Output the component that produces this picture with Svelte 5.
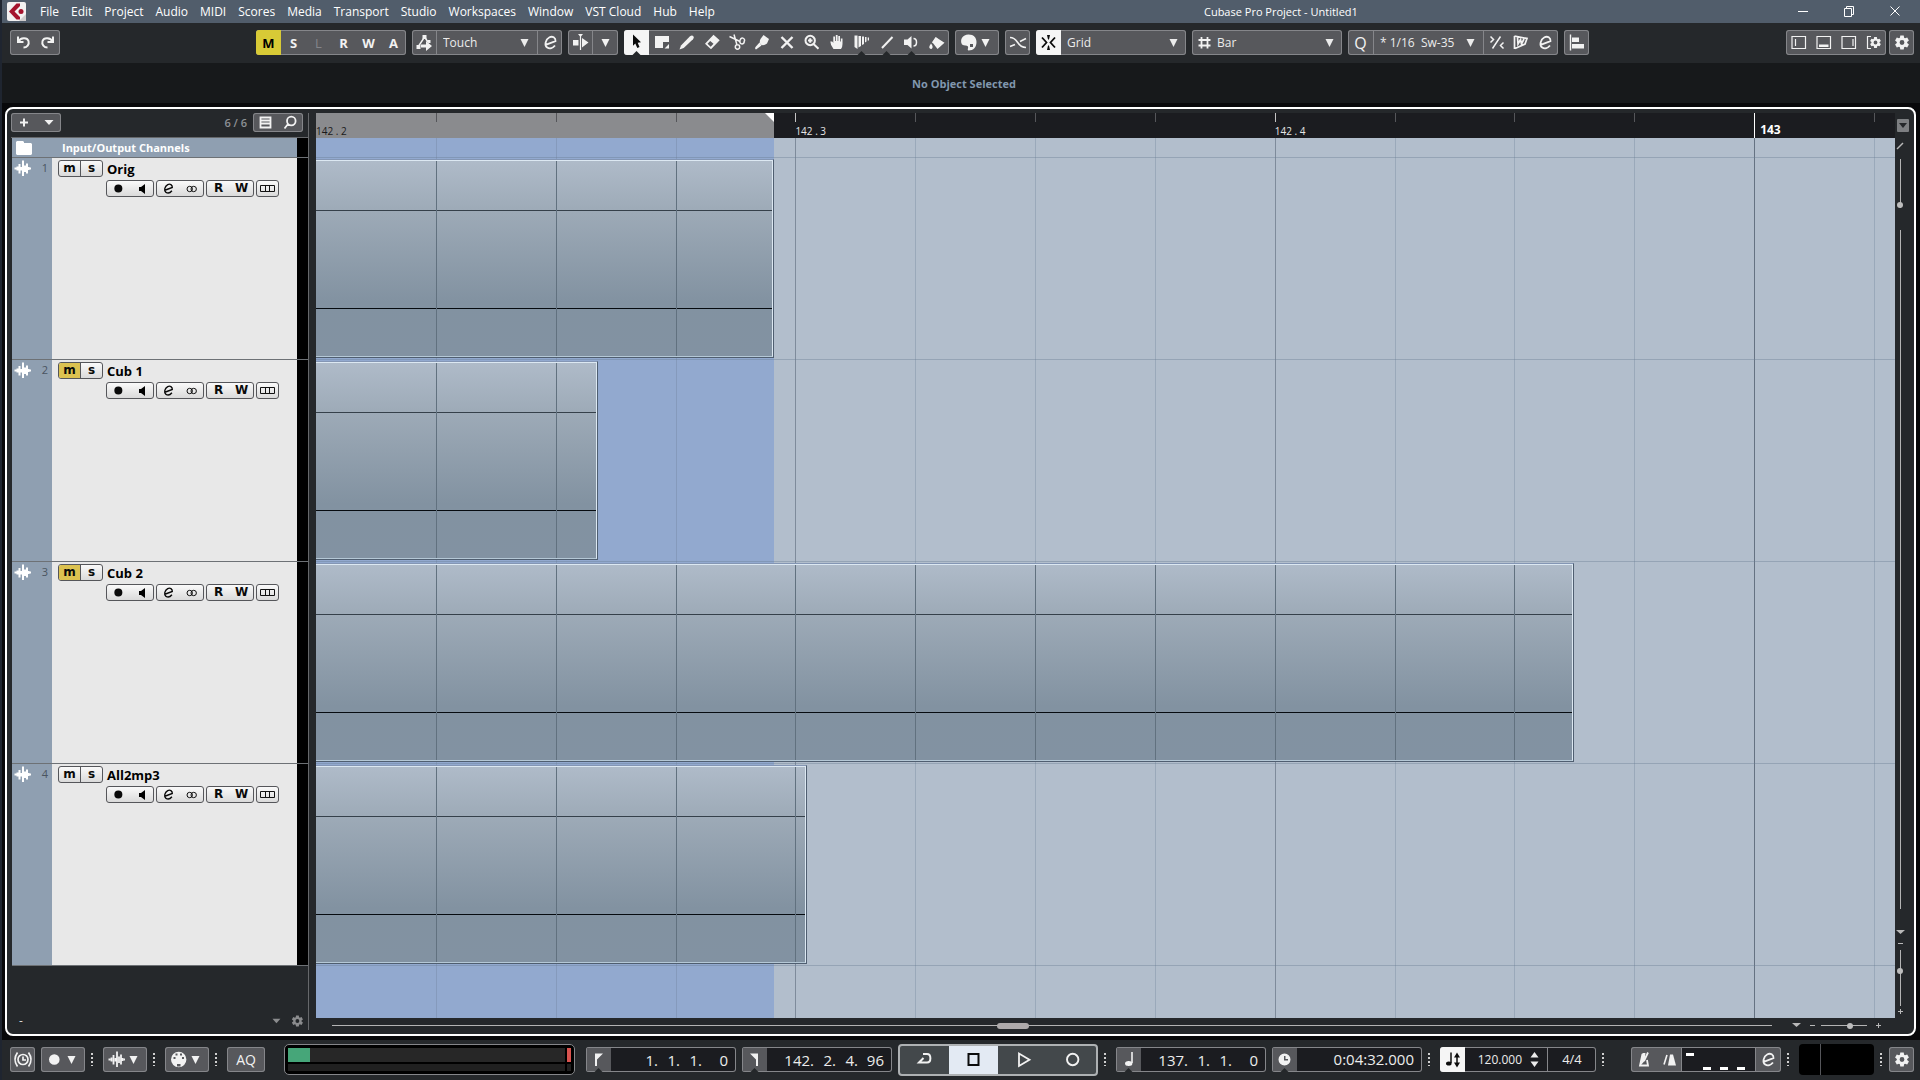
<script>
  // Builds a six-toothed cog outline around a round hole.
  function cog(cx, cy, outer, inner, hole) {
    const points = [];
    for (let i = 0; i < 6; i++) {
      const a = (i * Math.PI) / 3 - Math.PI / 2;
      for (const [offset, r] of [[-0.42, inner], [-0.24, outer], [0.24, outer], [0.42, inner]]) {
        points.push(`${(cx + r * Math.cos(a + offset)).toFixed(2)} ${(cy + r * Math.sin(a + offset)).toFixed(2)}`);
      }
    }
    return `M${points.join('L')}Z M${cx - hole} ${cy}a${hole} ${hole} 0 1 0 ${hole * 2} 0a${hole} ${hole} 0 1 0 ${-hole * 2} 0Z`;
  }

  // Every icon is drawn on a 25 unit square: f = filled, s = stroked, w = stroke width, n = dark notch below.
  const icons = {
    undo: { s: 'M8 6.5V12H13.500 M8.500 11.500C10.500 7.500 17 7 18.500 11C19.500 14.500 17 17.500 13.500 17.500', w: 2 },
    redo: { s: 'M18 6.5V12H12.500 M17.500 11.500C15.500 7.500 9 7 7.500 11C6.500 14.500 9 17.500 12.500 17.500', w: 2 },
    automation: { s: 'M6 17L12.500 7L16 12', w: 1.5, f: 'M4.500 15h4v4h-4zM10.500 5h4v4h-4zM15.500 10h3v3h-3zM9 14.500h5V11l6 5-6 5v-3.500H9z' },
    edit: { s: 'M7.700 14.800L17.500 11.200C17.800 7.600 14.500 5.800 11.500 7.300C7.500 9.500 6 15.300 9.200 17.600C11.800 19.200 15 18 17 15.500', w: 1.8 },
    autoscroll: { s: 'M12.500 4V20', w: 1.2, f: 'M10 4h5l-2.500 3zM5 10h5.500v5.500H5zM14 9.500V8l6.500 4.500L14 17.500V9.500z' },
    down: { f: 'M8.500 9h8l-4 8z' },
    arrow: { f: 'M9 4.500L17 12.300L13.700 12.700L15.500 17L13.300 18L11.300 13.600L9 15.800Z', n: true },
    range: { f: 'M6 6H20V12H14V18H6ZM20 14V18.500H15.500Z' },
    pencil: { f: 'M5.500 19.500L7 15.500L16 6.300Q18 4.800 19.400 6.200Q20.500 7.600 19 9.200L9.700 18Z' },
    eraser: { f: 'M14.500 4.800L20.700 10.300L12 19.300L6 13.800ZM11.200 10.900L8.500 13.700L11.700 16.700L14.500 13.800Z' },
    scissors: { s: 'M5.500 6.500L15.500 11.300M10 4.500L13 15M16.200 10.500a2.200 2.200 0 1 1 4 1a2.200 2.200 0 1 1-4-1M11.300 17a2.200 2.200 0 1 1 4.400 0a2.200 2.200 0 1 1-4.400 0', w: 1.5 },
    glue: { f: 'M14.500 5L20 9L18 13.500Q14.500 16.500 11.500 14.500Q10 12 11.500 9ZM10.500 12.500L12.500 15.500L7 19.500Q5.500 19 6.500 17Z' },
    cross: { s: 'M7.500 7L18.500 18M18.500 7L7.500 18', w: 2.4 },
    zoom: { s: 'M6.500 10.500a4.700 4.700 0 1 1 9.400 0a4.700 4.700 0 1 1-9.400 0M14.500 14L19.500 18.800M9 10.500h4.500M11.200 8.300v4.500', w: 2 },
    hand: { f: 'M9.500 19Q6.500 15.500 6.300 11.500H8.300L9.300 13V6.500H11V11H11.800V5H13.600V11H14.300V6H16V11.500H16.800V8.500H18.500V14Q18.500 17 17 19Z' },
    warp: { f: 'M5.500 5.500H8.500V19L5.500 17zM9.500 6h2.500v10l-2.500 1.500zM13 6.500h2v7.500l-2 1zM16 7h1.500v4.500l-1.500 1zM18.700 7.500h1.300v3h-1.300z', n: true },
    line: { s: 'M8 18L18.500 7', w: 2, n: true },
    speaker: { f: 'M5 9.500H8.500L12.500 6V18.500L8.500 15H5z', s: 'M14.500 8.500C18.500 8.500 18.500 16 14.500 16', w: 1.5, n: true },
    paint: { f: 'M11.500 7L20.500 12.800L13.500 19L9.300 13.500L8 12.500ZM7 13.500Q10 17 7.500 19Q4.500 18.500 5.500 16z', s: 'M9 12.500L13 8', w: 1.5 },
    palette: { f: 'M12.500 4.500C18 4.500 20.500 8 20.500 12C20.500 17 17.500 20.500 12.500 20.500C11 20 12.500 18 12 16.500C11 15 8 16 6 14.500C3.500 10 6.500 4.500 12.500 4.500ZM14 14v3h3v-3z' },
    crossfade: { s: 'M5 7.500C14 7.500 11 17.500 21 17.500M5 16.500L10 14.500M15 11.500L21 8.500', w: 1.6 },
    snap: { s: 'M6 7.500L10.500 12.500L6 17.500M19 7.500L14.500 12.500L19 17.500', w: 1.8, f: 'M11 5h3l-1 4.500h-1zM11 20h3l-1-4.500h-1z' },
    hash: { s: 'M9.500 7V18.500M15.500 7V18.500M6.500 10H18.500M6.500 15.500H18.500', w: 1.8 },
    iterative: { s: 'M16.500 6.500L8.500 18.500M6.500 6.500L9.500 9.500L6.500 12.500M19.500 12.500L16.500 15.500L19.500 18.500', w: 1.5 },
    quantize: { s: 'M6.500 6V19M6.500 6L19 8.500L17 14L7 18.500M9.500 7L10 14L12.500 9.500L13.500 14L16 9', w: 1.7 },
    align: { s: 'M6.500 4.500V20.500', w: 1.4, f: 'M8 7.500h7v4.500H8zM8 14h12v4.500H8z' },
    zoneLeft: { s: 'M6 6.500h13.500v12H6zM9.500 9v7', w: 1.2 },
    zoneDown: { s: 'M6 6.500h13.500v12H6z', f: 'M8 14.500h9.500v2.500H8z', w: 1.2 },
    zoneRight: { s: 'M6 6.500h13.500v12H6zM17 9v7', w: 1.2 },
    zoneSetup: { s: 'M10 6.500H6.500V18.500H10', f: cog(14.5, 12.5, 5.6, 4.1, 1.9), w: 1.2 },
    gear: { f: cog(13, 12.5, 7.2, 5.2, 2.4) },
    plus: { s: 'M13 8.500V16.500M9 12.500H17', w: 2 },
    drop: { f: 'M8.500 10h9l-4.500 5z' },
    list: { s: 'M7.500 7.500h10v10h-10zM8 10.500h9M8 13.500h9', w: 1.8 },
    search: { s: 'M9 11a4.300 4.300 0 1 1 8.600 0a4.300 4.300 0 1 1-8.600 0M10 14L6.500 18.500', w: 1.8 },
    wave: { s: 'M4.500 12.500H6.500M7.500 10.500V14.500M9.500 8V17.500M11.500 11V14.500M13 4.500V20M15 9.500V16M17 7.500V17.500M18.500 11V14M19.500 12.500H21', w: 1.8 },
    dot: { f: 'M7 12.500a5.300 5.300 0 1 1 10.600 0a5.300 5.300 0 1 1-10.600 0' },
    engine: { s: 'M8 12.500a5 5 0 1 1 10 0a5 5 0 1 1-10 0M13 9.500V13H16M7.500 5.500Q2.500 12.500 7.500 19.500M18.500 5.500Q23.500 12.500 18.500 19.500', w: 1.7 },
    midi: { f: 'M5 12.500a7.700 7.700 0 1 1 15.400 0a7.700 7.700 0 1 1-15.400 0M7.500 12h2v-2h-2zM9.500 8.500h2v-2h-2zM14 8.500h2v-2h-2zM16 12h2v-2h-2zM11 19.500h3.500v-2.500H11z' },
    left: { f: 'M9 6.500H17L11 12.500V19H9z', n: true },
    right: { f: 'M8 6.500H16V19H14V12.500z', n: true },
    cycle: { s: 'M11 7H15C19.500 7 19.500 15.500 15 15.500H8M11.500 11L7 15.500H15', w: 2 },
    stop: { s: 'M7.500 7h10v11h-10z', w: 2 },
    play: { s: 'M9 6.500V19L19.500 12.700Z', w: 1.8 },
    record: { s: 'M8 12.500a5.700 5.700 0 1 1 11.400 0a5.700 5.700 0 1 1-11.400 0', w: 1.9 },
    note: { s: 'M16 5V16', w: 1.6, f: 'M9 16.500a3.700 2.500 0 1 1 7.400 0a3.700 2.500 0 1 1-7.400 0', n: true },
    clock: { f: 'M6.500 12.500a6 6 0 1 1 12 0a6 6 0 1 1-12 0M12 9v4.500h4V12H13.500V9z', n: true },
    tempo: { s: 'M11 5.500V16M17 8V18', w: 1.5, f: 'M6 16.500a2.800 2 0 1 1 5.600 0a2.800 2 0 1 1-5.600 0M14 10.500L17 5.500L20 10.500zM14 15.500L17 20.500L20 15.500z' },
    metronome: { s: 'M11.500 7L9 18.500H17L16 13M13 14L17 5.500', w: 1.8, f: 'M11.500 6h3l-1 8-4 4.500z' },
    precount: { s: 'M8 17.500L11 8', w: 1.6, f: 'M14 7.500h3L20 18.500H12z' },
    updown: { f: 'M8.500 10.500L12.500 5L16.500 10.500zM8.500 14.500L12.500 20L16.500 14.500z' }
  };

  const menus = ['File', 'Edit', 'Project', 'Audio', 'MIDI', 'Scores', 'Media', 'Transport', 'Studio', 'Workspaces', 'Window', 'VST Cloud', 'Hub', 'Help'];
  const states = ['M', 'S', 'L', 'R', 'W', 'A'];
  const tools = ['arrow', 'range', 'pencil', 'eraser', 'scissors', 'glue', 'cross', 'zoom', 'hand', 'warp', 'line', 'speaker', 'paint'];

  // Clip and selection lengths are counted in sixteenth notes from the left edge of the view.
  const step = 7.59;
  const locatorEnd = 3.821;
  const tracks = [
    { name: 'Orig', muted: false, length: 3.821 },
    { name: 'Cub 1', muted: true, length: 2.353 },
    { name: 'Cub 2', muted: true, length: 10.497 },
    { name: 'All2mp3', muted: false, length: 4.097 }
  ];
  const cells = Array.from({ length: 14 }, (_, i) => i);
  const labels = { 0: '142 . 2', 4: '142 . 3', 8: '142 . 4', 12: '143' };
</script>

{#snippet icon(name, size = 25)}
  <svg class="icon" width={size} height={size} viewBox="0 0 25 25" aria-hidden="true">
    {#if icons[name].f}<path d={icons[name].f} fill="currentColor" fill-rule="evenodd" />{/if}
    {#if icons[name].s}<path d={icons[name].s} fill="none" stroke="currentColor" stroke-width={icons[name].w} />{/if}
    {#if icons[name].n}<path d="M8.500 25l4-4 4 4z" fill="#24272a" />{/if}
  </svg>
{/snippet}

{#snippet tool(name, label, extra = '')}
  <button class="cell {extra}" aria-label={label}>{@render icon(name)}</button>
{/snippet}

{#snippet position(parts)}
  <span class="position">{#each parts as part}<span>{part}</span>{/each}</span>
{/snippet}

<div class="app">
  <header class="menubar">
    <svg class="logo" width="19" height="19" viewBox="0 0 19 19" aria-hidden="true">
      <rect width="19" height="19" rx="2" fill="#f3f1f1" />
      <path d="M12 19L19 12V19z" fill="#cfcccc" />
      <path d="M2 9.500L9.500 1.500H13V4L7.500 9.500L13 15V17.500H9.500Z" fill="#a5132d" />
      <circle cx="14" cy="9.500" r="2.500" fill="#a5132d" />
    </svg>
    <nav class="menus">
      {#each menus as menu}<button class="menu">{menu}</button>{/each}
    </nav>
    <h1>Cubase Pro Project - Untitled1</h1>
    <div class="window-buttons">
      <button aria-label="Minimize"><svg width="12" height="12" viewBox="0 0 12 12"><path d="M1 5.500H11" /></svg></button>
      <button aria-label="Restore"><svg width="12" height="12" viewBox="0 0 12 12"><path d="M1.500 2.500h7v8h-7zM3.500 2.500v-2h7v8h-2" /></svg></button>
      <button aria-label="Close"><svg width="12" height="12" viewBox="0 0 12 12"><path d="M1.500 .5l9 9M10.500 .5l-9 9" /></svg></button>
    </div>
  </header>

  <div class="toolbar">
    <div class="history">
      <div class="group">{@render tool('undo', 'Undo')}{@render tool('redo', 'Redo')}</div>
    </div>
    <div class="group states">
      {#each states as s}<button class="cell state" class:on={s === 'M'} class:off={s === 'L'}>{s}</button>{/each}
    </div>
    <div class="group">
      {@render tool('automation', 'Automation panel', 'split')}
      <label class="drop mode"><select aria-label="Automation mode"><option>Touch</option></select>{@render icon('down')}</label>
      {@render tool('edit', 'Automation settings', 'split-left')}
    </div>
    <div class="group">{@render tool('autoscroll', 'Auto-scroll', 'split')}{@render tool('down', 'Auto-scroll settings')}</div>
    <div class="group">
      {#each tools as t, i}{@render tool(t, t, i === 0 ? 'active' : '')}{/each}
    </div>
    <div class="group"><button class="cell pair" aria-label="Colors">{@render icon('palette')}{@render icon('down')}</button></div>
    <div class="group">{@render tool('crossfade', 'Snap to zero crossing')}</div>
    <div class="group">
      {@render tool('snap', 'Snap', 'active')}
      <label class="drop fill"><select aria-label="Snap type"><option>Grid</option></select>{@render icon('down')}</label>
    </div>
    <div class="group">
      <span class="cell">{@render icon('hash')}</span>
      <label class="drop fill grid-type"><select aria-label="Grid type"><option>Bar</option></select>{@render icon('down')}</label>
    </div>
    <div class="group">
      <button class="cell split q" aria-label="Apply quantize">Q</button>
      <label class="drop preset"><select aria-label="Quantize preset"><option>* 1/16{'\u00a0\u00a0'}Sw-35</option></select>{@render icon('down')}</label>
      {@render tool('iterative', 'Iterative quantize', 'split-left')}{@render tool('quantize', 'Audio warp quantize')}{@render tool('edit', 'Quantize panel')}
    </div>
    <div class="group">{@render tool('align', 'Align')}</div>
    <div class="group last">
      {@render tool('zoneLeft', 'Left zone')}{@render tool('zoneDown', 'Lower zone')}{@render tool('zoneRight', 'Right zone')}{@render tool('zoneSetup', 'Window layout')}
    </div>
    <div class="group tight">{@render tool('gear', 'Toolbar setup')}</div>
  </div>

  <div class="info">No Object Selected</div>

  <main class="desk">
    <div class="frame">
      <section class="tracklist">
        <div class="list-head">
          <div class="group small">{@render tool('plus', 'Add track')}{@render tool('drop', 'Track presets')}</div>
          <span class="count">6 / 6</span>
          <div class="group small">{@render tool('list', 'Track visibility')}{@render tool('search', 'Find tracks')}</div>
        </div>
        <div class="folder">
          <svg width="16" height="14" viewBox="0 0 16 14" aria-hidden="true"><path d="M0 2V1L1 0H7L8 1V2H15L16 3V13L15 14H1L0 13Z" fill="#fff" /></svg>
          <span>Input/Output Channels</span>
        </div>
        {#each tracks as track, i}
          <article class="track">
            <div class="strip">
              <svg width="20" height="20" viewBox="2 2 20 20" aria-hidden="true"><path d={icons.wave.s} stroke="#fff" stroke-width="2" /></svg>
              <span>{i + 1}</span>
            </div>
            <div class="panel">
              <div class="title">
                <div class="pads"><button class:muted={track.muted}>m</button><button>s</button></div>
                <h2>{track.name}</h2>
              </div>
              <div class="controls">
                <div class="pads wide"><button aria-label="Record enable">{@render icon('dot', 19)}</button><button aria-label="Monitor"><svg width="6" height="10" viewBox="0 0 6 10"><path d="M0 3h2l4-3v10L2 7H0z" /></svg></button></div>
                <div class="pads wide"><button aria-label="Edit channel">{@render icon('edit', 19)}</button><button aria-label="Stereo"><svg width="12" height="8" viewBox="0 0 12 8"><path d="M1 4a2.700 2.700 0 1 1 5.400 0a2.700 2.700 0 1 1-5.400 0M5 4a2.700 2.700 0 1 1 5.400 0a2.700 2.700 0 1 1-5.400 0" fill="none" stroke="#111" /></svg></button></div>
                <div class="pads wide"><button>R</button><button>W</button></div>
                <div class="pads"><button aria-label="Lanes"><svg width="15" height="7" viewBox="0 0 15 7"><path d="M.5 .5h14v6H.5zM5.500 0v7M9.500 0v7" fill="none" stroke="#111" /></svg></button></div>
              </div>
            </div>
          </article>
        {/each}
        <div class="list-foot">
          <span>-</span>
          <button aria-label="Zoom presets">{@render icon('drop', 22)}</button>
          <button aria-label="Track list setup">{@render icon('gear', 20)}</button>
        </div>
      </section>

      <section class="arrange">
        <div class="timeline" style="--step: {step}">
          <div class="ruler">
            <div class="range" style="width: {locatorEnd * step}%"><svg width="9" height="9" viewBox="0 0 9 9" aria-hidden="true"><path d="M0 0H9V9z" fill="#fff" /></svg></div>
            <div class="ticks">
              {#each cells as c}
                <div class="tick" class:beat={c % 4 === 0} class:bar={c === 12} class:first={c === 0}><span>{labels[c] ?? ''}</span></div>
              {/each}
            </div>
          </div>
          <div class="canvas">
            <div class="range" style="width: {locatorEnd * step}%"></div>
            <div class="lines">
              {#each cells as c}<i class:first={c === 0} class:beat={c % 4 === 0} class:bar={c === 12}></i>{/each}
            </div>
            <div class="lanes">
              <div class="lane io"></div>
              {#each tracks as track}
                <div class="lane">
                  <div class="clip" style="width: {track.length * step}%">
                    <div class="wave"><b></b><b></b><b></b></div>
                    <div class="lines">
                      {#each cells as c}<i class:first={c === 0}></i>{/each}
                    </div>
                  </div>
                </div>
              {/each}
            </div>
          </div>
        </div>
        <div class="hscroll">
          <input class="scroll" type="range" min="0" max="1000" value="472" aria-label="Horizontal scroll" />
          <button aria-label="Zoom presets"><svg width="9" height="5" viewBox="0 0 9 5"><path d="M0 0h9L4.500 4z" /></svg></button>
          <button aria-label="Zoom out"><svg width="5" height="5" viewBox="0 0 5 5"><path d="M0 2h5v1H0z" /></svg></button>
          <input class="zoom" type="range" min="0" max="100" value="65" aria-label="Horizontal zoom" />
          <button aria-label="Zoom in"><svg width="5" height="5" viewBox="0 0 5 5"><path d="M0 2h5v1H0zM2 0h1v5H2z" /></svg></button>
        </div>
      </section>

      <aside class="rail">
        <button class="divide" aria-label="Divide track list"><svg width="8" height="5" viewBox="0 0 8 5"><path d="M0 0h8L4 5z" fill="#24272a" /></svg></button>
        <svg class="slash" width="8" height="8" viewBox="0 0 8 8" aria-hidden="true"><path d="M1 7L7 1" stroke="#b9b9b9" stroke-width="1.500" /></svg>
        <input class="vertical wave-zoom" type="range" min="0" max="100" value="100" aria-label="Waveform zoom" />
        <div class="vtrack"></div>
        <button aria-label="Track height presets"><svg width="9" height="5" viewBox="0 0 9 5"><path d="M0 0h9L4.500 4z" /></svg></button>
        <button aria-label="Smaller tracks"><svg width="5" height="5" viewBox="0 0 5 5"><path d="M0 2h5v1H0z" /></svg></button>
        <input class="vertical height-zoom" type="range" min="0" max="100" value="36" aria-label="Track height" />
        <button aria-label="Larger tracks"><svg width="5" height="5" viewBox="0 0 5 5"><path d="M0 2h5v1H0zM2 0h1v5H2z" /></svg></button>
      </aside>
    </div>
  </main>

  <footer class="transport">
    <div class="group">{@render tool('engine', 'Constrain delay compensation')}</div>
    <div class="group"><button class="cell pair" aria-label="Record modes">{@render icon('dot')}{@render icon('down')}</button></div>
    <i class="grip"></i>
    <div class="group"><button class="cell pair" aria-label="Audio record mode">{@render icon('wave')}{@render icon('down')}</button></div>
    <i class="grip"></i>
    <div class="group"><button class="cell pair" aria-label="MIDI record mode">{@render icon('midi')}{@render icon('down')}</button></div>
    <i class="grip"></i>
    <div class="group"><button class="cell aq">AQ</button></div>
    <div class="meter"><span class="level"></span><span class="clipping"></span><span class="under"></span><span class="under"></span></div>
    <div class="group readout">{@render tool('left', 'Left locator', 'tag')}{@render position(['1.', '1.', '1.', '0'])}</div>
    <div class="group readout">{@render tool('right', 'Right locator', 'tag')}{@render position(['142.', '2.', '4.', '96'])}</div>
    <div class="play">
      <button aria-label="Cycle">{@render icon('cycle')}</button>
      <button class="active" aria-label="Stop">{@render icon('stop')}</button>
      <button aria-label="Play">{@render icon('play')}</button>
      <button aria-label="Record">{@render icon('record')}</button>
    </div>
    <i class="grip"></i>
    <div class="group readout">{@render tool('note', 'Time format', 'tag')}{@render position(['137.', '1.', '1.', '0'])}</div>
    <div class="group readout">{@render tool('clock', 'Secondary time format', 'tag')}<span class="time">0:04:32.000</span></div>
    <i class="grip"></i>
    <div class="group readout">
      {@render tool('tempo', 'Tempo track', 'active')}
      <span class="tempo">120.000{@render icon('updown')}</span>
      <span class="signature">4/4</span>
    </div>
    <i class="grip"></i>
    <div class="group click">
      {@render tool('metronome', 'Metronome')}{@render tool('precount', 'Precount')}
      <span class="pattern"><svg width="62" height="19" viewBox="0 0 62 19" aria-hidden="true"><path d="M0 0h8v3H0zM17 14h8v3h-8zM34 14h8v3h-8zM51 14h8v3h-8z" fill="#fff" /></svg></span>
      {@render tool('edit', 'Click pattern')}
    </div>
    <i class="grip"></i>
    <div class="activity"></div>
    <i class="grip"></i>
    <div class="group tight">{@render tool('gear', 'Transport setup')}</div>
  </footer>
</div>

<style>
  :global(body) { margin: 0; background: #1f2530; }
  * { box-sizing: border-box; }
  .app {
    display: flex; flex-direction: column; min-height: 100vh; padding-left: 2px; background: #1f2530;
    font: 12px/16px "Open Sans", "Noto Sans", sans-serif; color: #ececec;
  }
  button, select, input { font: inherit; color: inherit; margin: 0; padding: 0; border: 0; background: none; }
  button { display: flex; align-items: center; justify-content: center; }
  svg { display: block; flex: none; }
  h1, h2 { margin: 0; font-size: inherit; }

  .menubar { display: flex; align-items: center; height: 23px; padding-left: 5px; background: #515d6b; color: #fff; }
  .menus { display: flex; gap: 12px; margin-left: 14px; }
  h1 { flex: 1; font-size: 11px; font-weight: 400; text-align: center; padding-left: 50px; }
  .window-buttons { display: flex; gap: 34px; padding-right: 19px; }
  .window-buttons path { fill: none; stroke: #fff; }

  .toolbar { display: flex; gap: 6px; height: 40px; padding: 7px 6px 0 8px; background: #25282b; }
  .history { width: 240px; display: flex; }
  .group {
    display: flex; flex: none; height: 25px; overflow: hidden; align-items: stretch;
    background: #57585c; border: 0 solid #85868a; box-shadow: inset 0 0 0 1px #85868a; border-radius: 3px;
  }
  .cell { display: flex; align-items: center; justify-content: center; width: 25px; color: #f2f2f2; }
  .split { border-right: 1px solid #85868a; }
  .split-left { border-left: 1px solid #85868a; }
  .active { background: #f5f5f5; color: #0c0c0c; }
  .state { font-weight: 700; font-size: 13px; }
  .state.on { background: #d8ca36; color: #000; }
  .state.off { color: #84858a; font-weight: 400; }
  .pair { width: 44px; }
  .pair > :global(svg) { margin: 0 -4px; }
  .q { width: 26px; font-size: 16px; }
  .last { margin-left: auto; }
  .tight { margin-left: -3px; }
  .drop { display: grid; align-items: center; }
  .drop > :global(*) { grid-area: 1 / 1; }
  .drop > :global(svg) { justify-self: end; pointer-events: none; }
  .drop select { appearance: none; width: 100%; height: 25px; padding-left: 6px; }
  .drop option { color: #111; }
  .mode { width: 100px; }
  .fill { width: 125px; }
  .grid-type select { padding-left: 0; }
  .preset { width: 109px; }

  .info { height: 40px; padding-left: 6px; background: #17191b; color: #8197ae; font-size: 11px; font-weight: 700; line-height: 42px; text-align: center; }

  .desk { display: flex; flex: 1; padding: 4px 4px 4px 3px; background: #08080a; }
  .frame {
    flex: 1; display: grid; grid-template-columns: 298px minmax(0, 1fr) 19px; padding: 4px 0 0 4px;
    border: 2px solid #fff; border-radius: 8px; background: #25282b;
  }
  .tracklist { display: flex; flex-direction: column; margin-bottom: 4px; border-right: 1px solid #66686b; }
  .list-head { display: flex; align-items: flex-start; height: 25px; padding-right: 5px; border-bottom: 1px solid #66686b; }
  .small { height: 19px; align-items: center; }
  .count { margin-left: auto; padding-right: 6px; font-size: 11px; font-weight: 600; line-height: 20px; color: #8d9196; }
  .folder, .track { margin-left: 1px; border-bottom: 1px solid #6d7175; }
  .folder {
    display: flex; align-items: center; gap: 30px; height: 20px; padding-left: 4px; color: #fff; font-size: 11px; font-weight: 700;
    background: linear-gradient(90deg, #8f9fb1 calc(100% - 11px), #000 0);
  }
  .track { display: grid; grid-template-columns: 40px 1fr; height: 202px; }
  .strip { display: flex; justify-content: space-between; align-items: flex-start; padding-right: 4px; background: #8f9fb1; }
  .strip span { font-size: 11px; line-height: 20px; color: #4a5460; }
  .panel { padding: 2px 0 0 6px; background: #e8e8e8; border-right: 11px solid #000; color: #000; }
  .title { display: flex; gap: 4px; }
  h2 { font-size: 13px; font-weight: 700; line-height: 18px; }
  .controls { display: flex; gap: 2px; padding: 2px 0 0 48px; }
  .pads {
    display: flex; height: 17px; overflow: hidden; border: 1px solid #55565a; border-radius: 3px;
    background: linear-gradient(#fafafa, #dadada); font: 700 12px/15px "DejaVu Sans", sans-serif;
  }
  .pads button { width: 21px; color: #0a0a0a; }
  .pads button.muted { background: #dcc250; }
  .title .pads button + button { width: 22px; border-left: 1px solid #55565a; }
  .wide button { width: 23px; }
  .list-foot { display: flex; align-items: center; margin-top: auto; padding: 0 1px 0 8px; height: 18px; color: #8b8c8e; }
  .list-foot span { color: #d8d8d8; margin-right: auto; }

  .arrange { display: flex; flex-direction: column; margin-left: 7px; min-width: 0; }
  .timeline { flex: 1; display: flex; flex-direction: column; container-type: inline-size; }
  .ruler { display: grid; height: 25px; overflow: hidden; background: #1b1c20; }
  .ruler > *, .canvas > *, .clip > * { grid-area: 1 / 1; min-width: 0; }
  .ruler .range { display: flex; justify-content: flex-end; background: #8a8b8e; }
  .ticks, .lines { display: flex; overflow: hidden; }
  .tick, .lines i { flex: none; width: calc(var(--step) * 1cqw); }
  .tick { white-space: nowrap; background: linear-gradient(#55565a, #55565a) 0 0 / 1px 9px no-repeat; }
  .tick.beat { background-image: linear-gradient(#c4c4c4, #c4c4c4); }
  .tick.bar { background-size: 1px 25px; background-image: linear-gradient(#fff, #fff); }
  .tick.first { background: none; }
  .tick span { display: block; padding-top: 11px; font-size: 10px; line-height: 14px; color: #e6e6e6; }
  .tick.first span { color: #1a1a1a; }
  .tick.bar span { padding: 9px 0 0 6px; font-size: 12px; font-weight: 700; line-height: 16px; color: #fff; }
  .canvas { flex: 1; display: grid; background: #b2becc; }
  .canvas .range { background: #92a9cf; }
  .lines i { border-left: 1px solid rgba(105, 125, 148, 0.32); }
  .lines i.beat { border-color: #7e8b9b; }
  .lines i.bar { border-color: #657282; }
  .clip .lines i { border-color: #61717f; }
  .lines i.first, .clip .lines i.first { border-color: transparent; }
  .lane { height: 202px; padding: 1px 0; border-bottom: 1px solid rgba(105, 125, 148, 0.4); }
  .lane.io { height: 20px; }
  .clip {
    display: grid; height: 199px; border: solid #4f5e70; border-width: 1px 1px 1px 0; border-top-color: #8496b4;
    background: linear-gradient(#afbbc9, #9daab7 26%, #8292a1 72%, #8292a2);
  }
  .wave { display: grid; grid-template-rows: 50px 98px 1fr; border: solid #dce8f2; border-width: 1px 1px 1px 0; border-bottom-color: #b5c8d6; }
  .wave b { border-bottom: 1px solid #35404a; }
  .wave b:nth-child(2) { border-color: #060b10; }
  .wave b:last-child { border: 0; }
  .clip .lines { margin-top: 1px; margin-bottom: 1px; }

  .hscroll { display: flex; align-items: center; height: 16px; padding: 0 14px 1px 16px; }
  .hscroll path, .rail button path { fill: #b9b9b9; }
  .hscroll button:nth-of-type(1) { margin-left: 20px; }
  .hscroll button:nth-of-type(2) { margin: 0 6px 0 9px; }
  .hscroll button:nth-of-type(3) { margin-left: 9px; }
  input[type="range"] { appearance: none; height: 6px; background: linear-gradient(#b4b4b4, #b4b4b4) center / 100% 1px no-repeat; }
  input::-webkit-slider-thumb { appearance: none; width: 6px; height: 6px; border-radius: 3px; background: #bdbdbd; }
  .scroll { flex: 1; min-width: 0; }
  .scroll::-webkit-slider-thumb { width: 32px; background: #aeaaab; }
  .zoom { width: 46px; }

  .rail { display: flex; flex-direction: column; align-items: center; padding: 6px 9px 20px 0; }
  .rail .divide { flex: none; width: 12px; height: 13px; margin-left: 6px; border-radius: 1px; background: #7d7f82; }
  .rail .divide path { fill: #24272a; }
  .slash { margin: 10px 0 9px; }
  .rail input.vertical {
    width: 6px; writing-mode: vertical-lr; background: linear-gradient(#b4b4b4, #b4b4b4) center / 1px 100% no-repeat;
  }
  .rail .wave-zoom { height: 49px; }
  .rail .height-zoom { height: 56px; margin: 4px 0 3px; }
  .vtrack { flex: 1; width: 1px; margin: 22px 0 21px; background: #b4b4b4; }
  .rail button:nth-of-type(3) { margin-top: 6px; }

  .transport { display: flex; align-items: center; gap: 6px; height: 40px; padding: 0 6px 1px 8px; background: #25282b; }
  .grip { flex: none; width: 6px; height: 13px; background: repeating-linear-gradient(#d0d0d0 0 2px, transparent 2px 4px) 0 0 / 2px 13px no-repeat; }
  .aq { width: 38px; font-size: 14px; }
  .meter {
    display: grid; grid-template-columns: 1fr 4px; grid-template-rows: 14px 7px; gap: 2px 2px; width: 291px; height: 31px;
    margin: 0 5px 0 13px; padding: 3px; border: 1px solid #85868a; border-radius: 5px; background: #000;
  }
  .level { background: linear-gradient(90deg, #46a679 22px, #272727 0); }
  .clipping { background: #d9534f; }
  .under { background: #202020; }
  .readout { background: #1b1c20; }
  .tag { background: #57585c; box-shadow: inset 1px 1px #85868a, inset 0 -1px #85868a; }
  .position { display: flex; align-items: center; width: 125px; padding-right: 8px; font-size: 15px; }
  .position span { width: 22px; text-align: right; }
  .position span:first-child { flex: 1; }
  .position span:last-child { width: 26px; }
  .time { width: 125px; padding-right: 8px; font-size: 15px; line-height: 25px; text-align: right; }
  .tempo { display: flex; align-items: center; justify-content: flex-end; width: 83px; border-right: 1px solid #85868a; }
  .signature { width: 48px; font-size: 13px; line-height: 25px; text-align: center; }
  .play { display: flex; flex: none; width: 200px; height: 32px; border: 2px solid #aeb1b3; border-radius: 4px; background: #43484b; }
  .play button { flex: 1; color: #f2f2f2; }
  .play button.active { background: #e3eaf3; color: #0c0c0c; }
  .click { margin-left: auto; }
  .pattern { width: 75px; padding: 5px 0 0 4px; background: #1b1c20; border: 1px solid #85868a; }
  .activity { flex: none; width: 75px; height: 31px; border-radius: 4px; background: linear-gradient(90deg, transparent 21px, #55565a 21px 22px, transparent 22px) #000; }
</style>
